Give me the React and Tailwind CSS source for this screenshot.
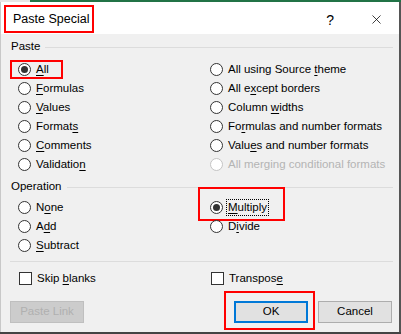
import { X } from 'lucide-react'

function Acc({ text, i }) {
  if (i == null) return <>{text}</>
  return (
    <>
      {text.slice(0, i)}
      <span className="underline underline-offset-[2px]">{text[i]}</span>
      {text.slice(i + 1)}
    </>
  )
}

function Radio({ label, u, checked, disabled, focus, children }) {
  return (
    <div className="relative flex items-center h-[19px]">
      {children}
      <span className={`w-[13px] h-[13px] rounded-full border flex items-center justify-center bg-white shrink-0 ${disabled ? 'border-[#c4c4c4]' : 'border-[#333]'}`}>
        {checked && <span className="w-[7px] h-[7px] rounded-full bg-[#333]" />}
      </span>
      <span className={`ml-[4px] px-[1px] leading-[15px] whitespace-nowrap ${focus ? 'outline outline-1 outline-dotted outline-black' : ''} ${disabled ? 'text-[#b4b4b4]' : 'text-black'}`}>
        <Acc text={label} i={disabled ? null : u} />
      </span>
    </div>
  )
}

function Check({ label, u }) {
  return (
    <div className="flex items-center h-[19px] mt-[1px]">
      <span className="w-[13px] h-[13px] border border-[#333] bg-white shrink-0" />
      <span className="ml-[5px]"><Acc text={label} i={u} /></span>
    </div>
  )
}

function Legend({ children }) {
  return (
    <div className="flex items-center h-[14px] pl-[10px] pr-[6px]">
      <span>{children}</span>
      <div className="flex-1 h-px bg-[#dcdcdc] ml-[5px]" />
    </div>
  )
}

export default function App() {
  return (
    <div className="w-[401px] h-[334px] flex flex-col bg-[#f0f0f0] text-[11.5px] text-black font-['Liberation_Sans',sans-serif] overflow-hidden">
      <div className="flex h-[2px] shrink-0">
        <div className="w-[30px] bg-[#e6e6e6]" />
        <div className="flex-1 bg-[#217346]" />
      </div>
      <div className="flex flex-1 min-h-0">
        <div className="flex-1 flex flex-col border-l border-[#c8c8c8]">
          <div className="h-[32px] bg-white flex items-start shrink-0">
            <div className="mt-[3px] ml-[3px] h-[28px] w-[90px] border-2 border-[#ff0000] flex items-center pl-[7px] text-[12.5px] whitespace-nowrap">
              Paste Special
            </div>
            <div className="ml-auto mt-[8px] text-[14px] mr-[35px]">?</div>
            <X size={15} strokeWidth={1.2} className="mt-[10px] mr-[15px]" />
          </div>

          <div className="pt-[6px]">
            <Legend>Paste</Legend>
          </div>

          <div className="grid grid-cols-[192px_1fr] pl-[17px] mt-[6px]">
            <Radio label="All" u={0} checked>
              <div className="absolute left-[-8px] top-0 w-[53px] h-[19px] border-2 border-[#ff0000]" />
            </Radio>
            <Radio label="All using Source theme" u={17} />
            <Radio label="Formulas" u={0} />
            <Radio label="All except borders" u={5} />
            <Radio label="Values" u={0} />
            <Radio label="Column widths" u={7} />
            <Radio label="Formats" u={6} />
            <Radio label="Formulas and number formats" u={2} />
            <Radio label="Comments" u={0} />
            <Radio label="Values and number formats" u={4} />
            <Radio label="Validation" u={9} />
            <Radio label="All merging conditional formats" disabled />
          </div>

          <div className="mt-[6px]">
            <Legend>Operation</Legend>
          </div>

          <div className="grid grid-cols-[192px_1fr] pl-[17px] mt-[4px]">
            <Radio label="None" u={1} />
            <Radio label="Multiply" u={0} checked focus>
              <div className="absolute left-[-12px] top-[-11px] w-[87px] h-[34px] border-2 border-[#ff0000]" />
            </Radio>
            <Radio label="Add" u={1} />
            <Radio label="Divide" u={1} />
            <Radio label="Subtract" u={0} />
            <div />
          </div>

          <div className="mx-[9px] mr-[6px] mt-[6px] h-px bg-[#dcdcdc]" />

          <div className="grid grid-cols-[192px_1fr] pl-[18px] mt-[6px]">
            <Check label="Skip blanks" u={5} />
            <Check label="Transpose" u={8} />
          </div>

          <div className="flex items-start pl-[9px] pr-[7px] mt-[13px]">
            <button className="w-[74px] h-[22px] bg-[#cccccc] border border-[#bfbfbf] text-[#b0b0b0]">Paste Link</button>
            <div className="relative ml-auto">
              <div className="absolute left-[-10px] top-[-10px] w-[91px] h-[39px] border-2 border-[#ff0000]" />
              <button className="w-[74px] h-[22px] bg-[#e1e1e1] border-2 border-[#0078d7]">OK</button>
            </div>
            <button className="ml-[10px] w-[74px] h-[22px] bg-[#e1e1e1] border border-[#adadad]">Cancel</button>
          </div>
        </div>
        <div className="w-[2px] bg-[#555]" />
      </div>
      <div className="h-[2px] bg-[#444] shrink-0" />
    </div>
  )
}
